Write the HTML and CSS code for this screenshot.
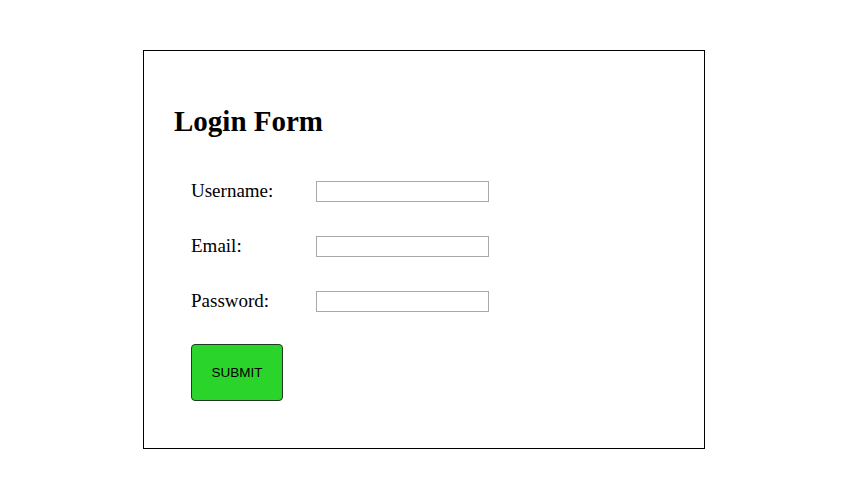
FILE: index.html
```html
<!DOCTYPE html>
<html>
<head>
<meta charset="utf-8">
<link rel="stylesheet" href="styles.css">
</head>
<body>
<div class="card">
  <h1 class="title">Login Form</h1>
  <form class="form">
    <div class="row"><label class="label">Username:</label><input class="field" type="text"></div>
    <div class="row"><label class="label">Email:</label><input class="field" type="text"></div>
    <div class="row"><label class="label">Password:</label><input class="field" type="password"></div>
    <button class="submit" type="button">SUBMIT</button>
  </form>
</div>
</body>
</html>
```
FILE: styles.css
```css
html, body { margin: 0; padding: 0; background: #fff; }
body { font-family: "Liberation Serif", "Times New Roman", serif; color: #000; }
.card {
  box-sizing: border-box;
  width: 562px;
  height: 399px;
  margin: 50px 0 0 143px;
  border: 1px solid #000;
  padding: 0 30px 0 30px;
}
.title {
  font-size: 29px;
  font-weight: bold;
  margin: 54px 0 0 0;
  line-height: 32px;
}
.form { padding-left: 17px; margin-top: 43px; }
.row {
  display: grid;
  grid-template-columns: 125px 173px;
  align-items: center;
  height: 21px;
  margin-bottom: 34px;
}
.label { font-size: 19px; line-height: 21px; padding-bottom: 2px; }
.field {
  box-sizing: border-box;
  width: 173px;
  height: 21px;
  border: 1px solid #a9a9a9;
  margin: 0;
  padding: 0 2px;
  background: #fff;
}
.submit {
  display: block;
  box-sizing: border-box;
  width: 92px;
  height: 57px;
  margin-top: -1px;
  background: #2ad42a;
  border: 1px solid #1f3a1f;
  border-radius: 4px;
  font-family: "Liberation Sans", Arial, sans-serif;
  font-size: 13.5px;
  color: #000;
  padding: 0;
}
```
